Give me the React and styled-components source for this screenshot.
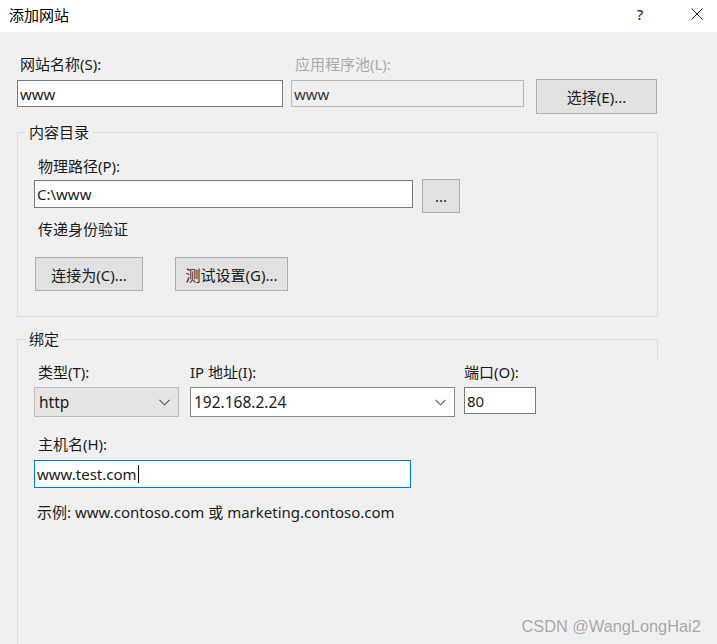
import React from "react";
import styled, { createGlobalStyle } from "styled-components";

const Global = createGlobalStyle`
  html, body { margin: 0; padding: 0; }
  body {
    width: 717px;
    height: 644px;
    overflow: hidden;
    font-family: "Noto Sans", "Noto Sans CJK SC", sans-serif;
    font-size: 15px;
    color: #1a1a1a;
    background: #f0f0f0;
  }
  * { box-sizing: border-box; }
`;

const Window = styled.div`
  position: relative;
  width: 717px;
  height: 644px;
  display: flex;
  flex-direction: column;
  background: #f0f0f0;
`;

const TitleBar = styled.div`
  height: 32px;
  flex: none;
  background: #ffffff;
  display: flex;
  align-items: center;
  padding: 0 0 4px 9px;
`;

const Title = styled.div`
  flex: 1;
  font-family: "Noto Sans CJK SC", sans-serif;
  font-size: 15px;
  color: #000;
`;

const TitleButton = styled.div`
  width: ${(p) => p.$w}px;
  margin-right: ${(p) => p.$mr || 0}px;
  height: 28px;
  display: flex;
  align-items: center;
  justify-content: center;
  font-size: 15px;
  color: #111;
`;

const Body = styled.div`
  flex: 1;
  display: flex;
  flex-direction: column;
  padding: 22px 0 0 17px;
`;

const TopRow = styled.div`
  display: flex;
  align-items: flex-start;
  margin-bottom: 18px;
`;

const Field = styled.div`
  display: flex;
  flex-direction: column;
  width: ${(p) => p.$w}px;
  margin-right: ${(p) => p.$mr || 0}px;
`;

const Label = styled.div`
  height: 20px;
  line-height: 20px;
  padding-left: ${(p) => (p.$indent ?? 3)}px;
  margin-bottom: ${(p) => p.$mb ?? 6}px;
  color: ${(p) => (p.$disabled ? "#a8a8a8" : "#1a1a1a")};
  white-space: nowrap;
`;

const TextBox = styled.div`
  height: ${(p) => p.$h || 27}px;
  width: ${(p) => (p.$w ? p.$w + "px" : "100%")};
  border: 1px solid ${(p) => (p.$focus ? "#0078d7" : p.$disabled ? "#b9b9b9" : "#7a7a7a")};
  background: ${(p) => (p.$disabled ? "#f0f0f0" : "#ffffff")};
  color: ${(p) => (p.$disabled ? "#333" : "#1a1a1a")};
  display: flex;
  align-items: center;
  padding-left: 2px;
  white-space: nowrap;
`;

const Caret = styled.span`
  display: inline-block;
  width: 1px;
  height: 18px;
  background: #000;
  margin-left: 1px;
`;

const Button = styled.div`
  width: ${(p) => p.$w}px;
  height: ${(p) => p.$h || 34}px;
  margin-top: ${(p) => p.$mt || 0}px;
  margin-right: ${(p) => p.$mr || 0}px;
  margin-left: ${(p) => p.$ml || 0}px;
  background: #e1e1e1;
  border: 1px solid #adadad;
  display: flex;
  align-items: center;
  justify-content: center;
  color: #1a1a1a;
  white-space: nowrap;
  flex: none;
`;

const Group = styled.div`
  position: relative;
  width: 641px;
  border: 1px solid #dcdcdc;
  padding: 22px 0 0 16px;
  ${(p) =>
    p.$open
      ? `
    flex: 1;
    border-right: none;
    border-bottom: none;
    margin-top: 22px;
    &::after {
      content: "";
      position: absolute;
      right: 0;
      top: -1px;
      width: 1px;
      height: 21px;
      background: #dcdcdc;
    }
  `
      : `padding-bottom: 25px;`}
`;

const Legend = styled.span`
  position: absolute;
  top: -11px;
  left: 8px;
  padding: 0 3px;
  line-height: 20px;
  background: #f0f0f0;
  color: #1a1a1a;
`;

const Row = styled.div`
  display: flex;
  align-items: flex-start;
`;

const Text = styled.div`
  line-height: 20px;
  padding-left: ${(p) => p.$indent ?? 4}px;
  margin-top: ${(p) => p.$mt || 0}px;
  margin-bottom: ${(p) => p.$mb || 0}px;
  white-space: nowrap;
`;

const Select = styled.div`
  height: 30px;
  width: ${(p) => p.$w}px;
  border: 1px solid ${(p) => (p.$flat ? "#bdbdbd" : "#8a8a8a")};
  background: ${(p) => (p.$flat ? "#e5e5e5" : "#ffffff")};
  display: flex;
  align-items: center;
  padding: 0 8px 0 ${(p) => (p.$flat ? 4 : 3)}px;
`;

const SelectValue = styled.span`
  flex: 1;
  font-size: 15.5px;
`;

const Watermark = styled.div`
  position: absolute;
  right: 16px;
  bottom: 8px;
  font-family: "Liberation Sans", sans-serif;
  font-size: 16px;
  color: #a6a6a6;
  text-shadow: 0 0 1px #fff;
  transform: scaleX(1.02);
  transform-origin: right center;
`;

const Chevron = () => (
  <svg width="11" height="7" viewBox="0 0 11 7">
    <path d="M0.5 0.8 L5.5 5.8 L10.5 0.8" fill="none" stroke="#555" strokeWidth="1.1" />
  </svg>
);

const CloseIcon = () => (
  <svg width="12" height="12" viewBox="0 0 12 12">
    <path d="M0.5 0.5 L11.5 11.5 M11.5 0.5 L0.5 11.5" stroke="#222" strokeWidth="1" />
  </svg>
);

export default function App() {
  return (
    <>
      <Global />
      <Window>
        <TitleBar>
          <Title>添加网站</Title>
          <TitleButton $w={46} $mr={14}>?</TitleButton>
          <TitleButton $w={40}>
            <CloseIcon />
          </TitleButton>
        </TitleBar>
        <Body>
          <TopRow>
            <Field $w={266} $mr={8}>
              <Label>网站名称(S):</Label>
              <TextBox>www</TextBox>
            </Field>
            <Field $w={233} $mr={12}>
              <Label $indent={4} $disabled>应用程序池(L):</Label>
              <TextBox $disabled>www</TextBox>
            </Field>
            <Button $w={121} $h={35} $mt={25}>选择(E)...</Button>
          </TopRow>

          <Group>
            <Legend>内容目录</Legend>
            <Label $indent={4} $mb={4} style={{ marginTop: 1 }}>物理路径(P):</Label>
            <Row>
              <TextBox $w={379} $h={28} style={{ marginRight: 9 }}>C:\www</TextBox>
              <Button $w={38} $h={34} $mt={-1}>...</Button>
            </Row>
            <Text $mt={6} $mb={18}>传递身份验证</Text>
            <Row>
              <Button $w={108} $mr={32} $ml={1}>连接为(C)...</Button>
              <Button $w={113}>测试设置(G)...</Button>
            </Row>
          </Group>

          <Group $open>
            <Legend>绑定</Legend>
            <Row>
              <Field $w={145} $mr={11}>
                <Label $indent={4} $mb={5}>类型(T):</Label>
                <Select $w={145} $flat>
                  <SelectValue>http</SelectValue>
                  <Chevron />
                </Select>
              </Field>
              <Field $w={265} $mr={9}>
                <Label $indent={0} $mb={5}>IP 地址(I):</Label>
                <Select $w={265}>
                  <SelectValue>192.168.2.24</SelectValue>
                  <Chevron />
                </Select>
              </Field>
              <Field $w={72}>
                <Label $indent={0} $mb={5}>端口(O):</Label>
                <TextBox>80</TextBox>
              </Field>
            </Row>
            <Label $indent={4} $mb={6} style={{ marginTop: 17 }}>主机名(H):</Label>
            <TextBox $w={377} $h={28} $focus>
              www.test.com<Caret />
            </TextBox>
            <Text $indent={3} $mt={14}>示例: www.contoso.com 或 marketing.contoso.com</Text>
          </Group>
        </Body>
        <Watermark>CSDN @WangLongHai2</Watermark>
      </Window>
    </>
  );
}
